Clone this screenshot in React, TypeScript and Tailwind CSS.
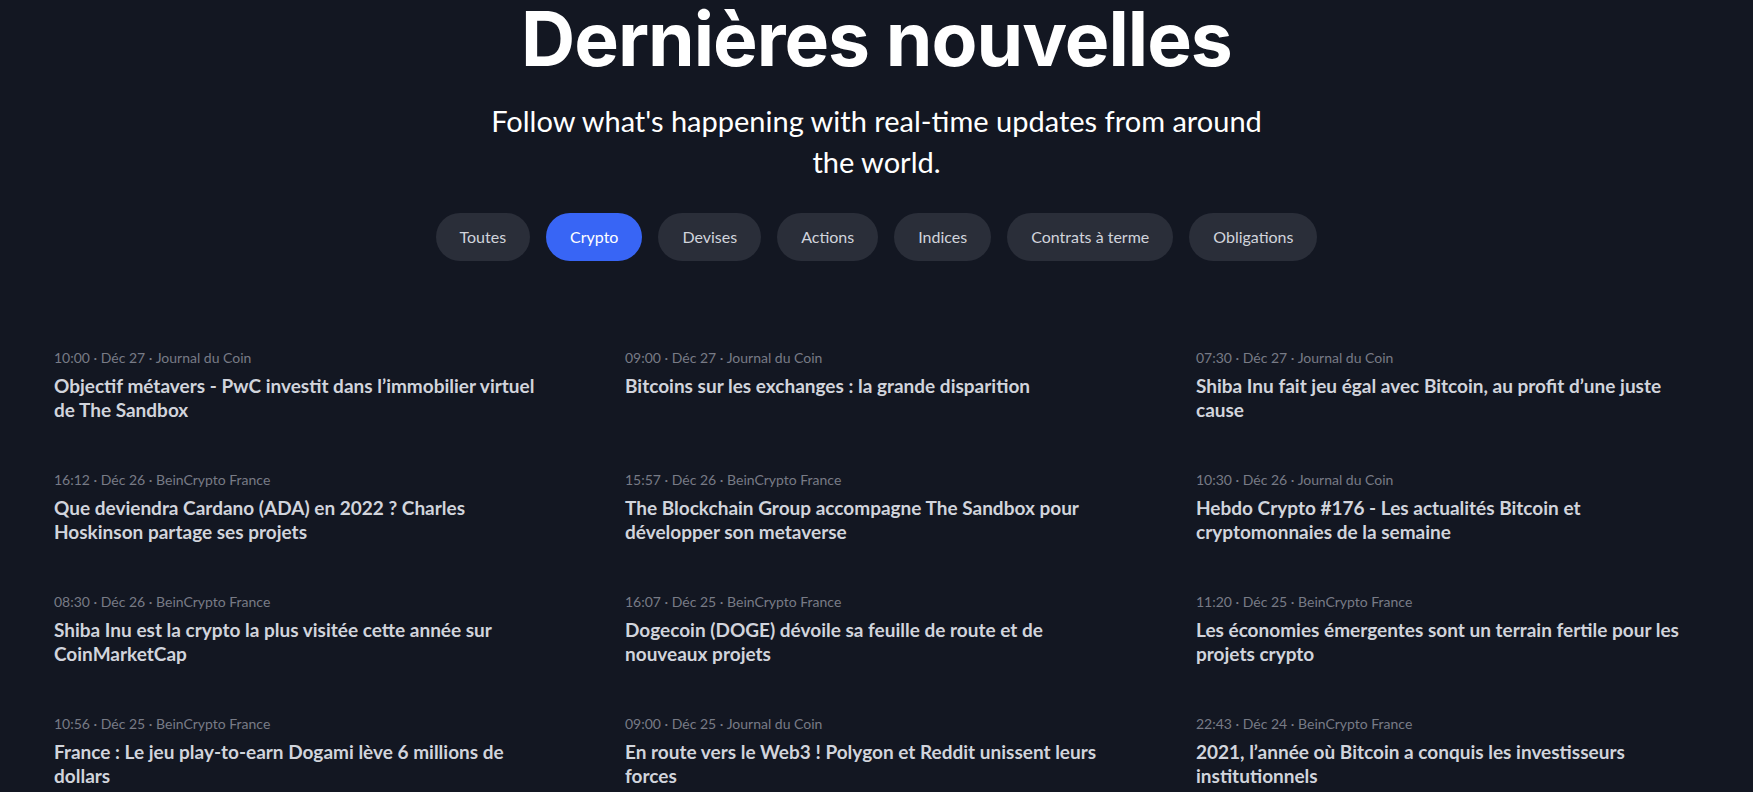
import React from "react";

const tabs = ["Toutes", "Crypto", "Devises", "Actions", "Indices", "Contrats à terme", "Obligations"];

const news = [
  { meta: "10:00 · Déc 27 · Journal du Coin", title: "Objectif métavers - PwC investit dans l’immobilier virtuel de The Sandbox" },
  { meta: "09:00 · Déc 27 · Journal du Coin", title: "Bitcoins sur les exchanges : la grande disparition" },
  { meta: "07:30 · Déc 27 · Journal du Coin", title: "Shiba Inu fait jeu égal avec Bitcoin, au profit d’une juste cause" },
  { meta: "16:12 · Déc 26 · BeinCrypto France", title: "Que deviendra Cardano (ADA) en 2022 ? Charles Hoskinson partage ses projets" },
  { meta: "15:57 · Déc 26 · BeinCrypto France", title: "The Blockchain Group accompagne The Sandbox pour développer son metaverse" },
  { meta: "10:30 · Déc 26 · Journal du Coin", title: "Hebdo Crypto #176 - Les actualités Bitcoin et cryptomonnaies de la semaine" },
  { meta: "08:30 · Déc 26 · BeinCrypto France", title: "Shiba Inu est la crypto la plus visitée cette année sur CoinMarketCap" },
  { meta: "16:07 · Déc 25 · BeinCrypto France", title: "Dogecoin (DOGE) dévoile sa feuille de route et de nouveaux projets" },
  { meta: "11:20 · Déc 25 · BeinCrypto France", title: "Les économies émergentes sont un terrain fertile pour les projets crypto" },
  { meta: "10:56 · Déc 25 · BeinCrypto France", title: "France : Le jeu play-to-earn Dogami lève 6 millions de dollars" },
  { meta: "09:00 · Déc 25 · Journal du Coin", title: "En route vers le Web3 ! Polygon et Reddit unissent leurs forces" },
  { meta: "22:43 · Déc 24 · BeinCrypto France", title: "2021, l’année où Bitcoin a conquis les investisseurs institutionnels" },
];

export default function App() {
  return (
    <div className="h-[792px] w-full overflow-hidden bg-[#131722] text-[#d1d4dc] [font-family:Lato,'Open_Sans',sans-serif]">
      <div className="flex flex-col items-center">
        <h1 className="mt-[-6px] text-[75px] font-bold leading-[90px] tracking-[-1px] text-white [font-family:Inter,sans-serif]">
          Dernières nouvelles
        </h1>
        <p className="mt-[16px] text-center text-[29px] leading-[41px] text-white">
          Follow what's happening with real-time updates from around
          <br />
          the world.
        </p>
        <div className="mt-[31px] flex gap-4">
          {tabs.map((t) => (
            <div
              key={t}
              className={
                t === "Crypto"
                  ? "flex h-12 items-center rounded-full bg-[#3865f5] px-6 text-[16px] text-white"
                  : "flex h-12 items-center rounded-full bg-[#2a2e39] px-6 text-[16px] text-[#d1d4dc]"
              }
            >
              {t}
            </div>
          ))}
        </div>
      </div>
      <div className="mx-[54px] mt-[88px] grid grid-cols-3 gap-x-[68px] gap-y-[48px]">
        {news.map((n, i) => (
          <div key={i} className="h-[74px]">
            <div className="text-[14px] leading-[18px] text-[#787b86]">{n.meta}</div>
            <div className="mt-[7px] text-[19px] font-bold leading-[24px] text-[#d1d4dc]">{n.title}</div>
          </div>
        ))}
      </div>
    </div>
  );
}
